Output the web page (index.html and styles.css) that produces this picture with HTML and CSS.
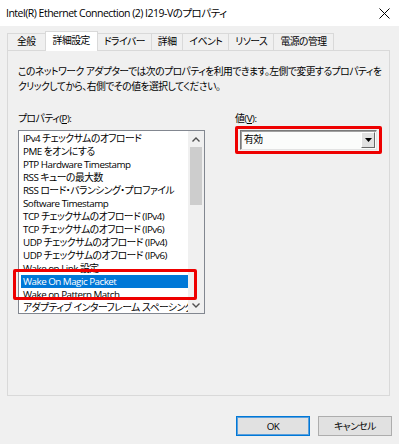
FILE: index.html
```html
<!DOCTYPE html>
<html lang="ja">
<head>
    <meta charset="UTF-8">
    <title>Intel(R) Ethernet Connection (2) I219-Vのプロパティ</title>
    <link rel="stylesheet" href="styles.css">
</head>
<body>
    <div class="titlebar">
        <span class="title">Intel(R) Ethernet Connection (2) I219-Vのプロパティ</span>
        <svg class="close" width="11" height="11" viewBox="0 0 11 11">
            <path d="M0.5 0.5 L10.5 10.5 M10.5 0.5 L0.5 10.5" stroke="#000" stroke-width="1" fill="none"/>
        </svg>
    </div>

    <div class="tabs">
        <div class="tab tab-first">全般</div>
        <div class="tab active">詳細設定</div>
        <div class="tab">ドライバー</div>
        <div class="tab">詳細</div>
        <div class="tab">イベント</div>
        <div class="tab">リソース</div>
        <div class="tab">電源の管理</div>
    </div>

    <div class="panel">
        <p class="intro">このネットワーク アダプターでは次のプロパティを利用できます。左側で変更するプロパティを<br>クリックしてから、右側でその値を選択してください。</p>

        <div class="props">
            <div class="col">
                <label class="caption">プロパティ(<u>P</u>):</label>
                <div class="list-wrap">
                    <div class="listbox">
                        <div class="items">
                            <div class="item">IPv4 チェックサムのオフロード</div>
                            <div class="item">PME をオンにする</div>
                            <div class="item">PTP Hardware Timestamp</div>
                            <div class="item">RSS キューの最大数</div>
                            <div class="item">RSS ロード・バランシング・プロファイル</div>
                            <div class="item">Software Timestamp</div>
                            <div class="item">TCP チェックサムのオフロード (IPv4)</div>
                            <div class="item">TCP チェックサムのオフロード (IPv6)</div>
                            <div class="item">UDP チェックサムのオフロード (IPv4)</div>
                            <div class="item">UDP チェックサムのオフロード (IPv6)</div>
                            <div class="item">Wake on Link 設定</div>
                            <div class="item selected">Wake On Magic Packet</div>
                            <div class="item">Wake on Pattern Match</div>
                            <div class="item">アダプティブ インターフレーム スペーシング</div>
                        </div>
                        <div class="scroll">
                            <div class="arrow">
                                <svg width="8" height="5" viewBox="0 0 8 5"><path d="M0.5 4.5 L4 1 L7.5 4.5" stroke="#505050" stroke-width="1.4" fill="none"/></svg>
                            </div>
                            <div class="track"><div class="thumb"></div></div>
                            <div class="arrow">
                                <svg width="8" height="5" viewBox="0 0 8 5"><path d="M0.5 0.5 L4 4 L7.5 0.5" stroke="#505050" stroke-width="1.4" fill="none"/></svg>
                            </div>
                        </div>
                    </div>
                    <div class="mark mark-list"></div>
                </div>
            </div>

            <div class="col">
                <label class="caption">値(<u>V</u>):</label>
                <div class="select-wrap">
                    <div class="select">
                        <span class="select-text">有効</span>
                        <span class="drop">
                            <svg width="7" height="4" viewBox="0 0 7 4"><path d="M0 0 H7 L3.5 4 Z" fill="#000"/></svg>
                        </span>
                    </div>
                    <div class="mark mark-select"></div>
                </div>
            </div>
        </div>
    </div>

    <div class="footer">
        <button class="btn default">OK</button>
        <button class="btn">キャンセル</button>
    </div>
</body>
</html>
```

FILE: styles.css
```css
body {
    margin: 0;
    background-color: #f0f0f0;
    font-family: "Open Sans", "Noto Sans CJK JP", sans-serif;
    font-size: 9.8px;
    letter-spacing: -0.5px;
    font-feature-settings: "palt";
    color: #000;
}
.titlebar {
    height: 26px;
    background-color: #fff;
    display: flex;
    align-items: center;
    justify-content: space-between;
    padding: 0 9px 0 6px;
}
.title {
    font-size: 10.5px;
    line-height: 16px;
}
.tabs {
    display: flex;
    align-items: flex-end;
    height: 24px;
    padding-left: 7px;
}
.tab {
    box-sizing: border-box;
    height: 17px;
    line-height: 16px;
    padding: 0 6px;
    border: 1px solid #d9d9d9;
    border-bottom: none;
    margin-left: -1px;
    background-color: #f0f0f0;
}
.tab-first {
    margin-left: 0;
    padding: 0 9px;
}
.tab.active {
    height: 20px;
    line-height: 18px;
    padding: 0 7px;
    margin-bottom: -1px;
    background-color: #fff;
    position: relative;
    z-index: 1;
}
.panel {
    box-sizing: border-box;
    height: 346px;
    margin: 0 9px 0 7px;
    border: 1px solid #d9d9d9;
    padding: 13px 10px 0 10px;
}
.intro {
    margin: 0;
    line-height: 15px;
    white-space: nowrap;
}
.props {
    display: flex;
    gap: 30px;
    margin-top: 17px;
}
.caption {
    display: block;
    line-height: 15px;
    margin-bottom: 4px;
}
.list-wrap,
.select-wrap {
    position: relative;
}
.listbox {
    box-sizing: border-box;
    width: 187px;
    height: 184px;
    border: 1px solid #828790;
    background-color: #fff;
    display: flex;
    overflow: hidden;
}
.items {
    flex: 1;
    padding-top: 1px;
    overflow: hidden;
}
.item {
    height: 13px;
    line-height: 13px;
    margin-left: 2px;
    padding-left: 2px;
    white-space: nowrap;
    overflow: hidden;
}
.item.selected {
    background-color: #0078d7;
    color: #fff;
}
.scroll {
    width: 16px;
    background-color: #f0f0f0;
    display: flex;
    flex-direction: column;
}
.arrow {
    height: 16px;
    display: flex;
    align-items: center;
    justify-content: center;
}
.track {
    flex: 1;
}
.thumb {
    height: 58px;
    margin: 0 2px;
    background-color: #cdcdcd;
}
.mark {
    position: absolute;
    box-sizing: border-box;
    border: 3px solid #ee0000;
    border-radius: 2px;
}
.mark-list {
    left: -5px;
    top: 139px;
    width: 184px;
    height: 31px;
}
.select {
    box-sizing: border-box;
    display: flex;
    align-items: center;
    justify-content: space-between;
    width: 137px;
    height: 20px;
    margin-top: 1px;
    margin-left: 5px;
    background-color: #fbfcfb;
    border-top: 1px solid #7a7a7a;
    border-left: 1px solid #7a7a7a;
    border-right: 1px solid #e3e3e3;
    border-bottom: 1px solid #e3e3e3;
    box-shadow: inset 1px 1px 0 #a0a0a0;
}
.select-text {
    padding-left: 3px;
    line-height: 16px;
}
.drop {
    box-sizing: border-box;
    width: 14px;
    height: 16px;
    margin-right: 1px;
    display: flex;
    align-items: center;
    justify-content: center;
    background-color: #e1e1e1;
    border-top: 1px solid #fff;
    border-left: 1px solid #fff;
    border-right: 1px solid #696969;
    border-bottom: 1px solid #696969;
}
.mark-select {
    left: 0;
    top: -4px;
    width: 147px;
    height: 28px;
}
.footer {
    display: flex;
    justify-content: flex-end;
    gap: 8px;
    padding: 20px 7px 0 0;
}
.btn {
    box-sizing: border-box;
    width: 74px;
    height: 20px;
    padding: 0;
    font: inherit;
    letter-spacing: inherit;
    font-feature-settings: "palt";
    line-height: 17px;
    color: #000;
    background-color: #e1e1e1;
    border: 1px solid #adadad;
}
.btn.default {
    border-color: #0078d7;
    box-shadow: inset 0 0 0 1px #5a9fdc;
}
```
